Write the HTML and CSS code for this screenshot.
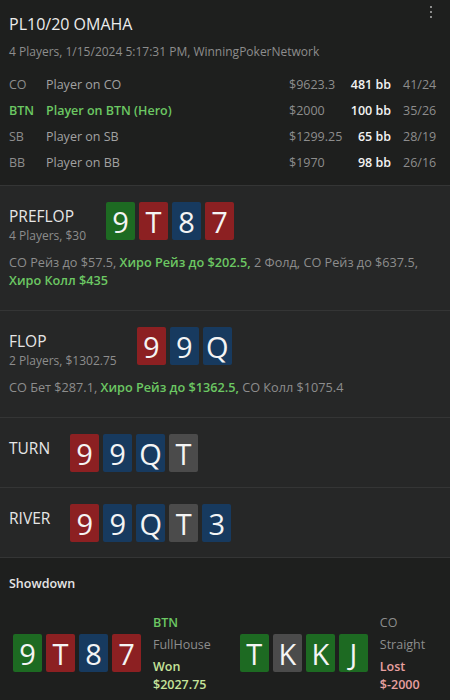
FILE: index.html
```html
<!DOCTYPE html>
<html lang="ru">
<head>
    <meta charset="UTF-8">
    <meta name="viewport" content="width=device-width, initial-scale=1.0">
    <title>PL10/20 OMAHA</title>
    <link rel="stylesheet" href="styles.css">
</head>
<body>
    <div class="header">
        <button class="menu-btn"><span></span><span></span><span></span></button>
        <h1>PL10/20 OMAHA</h1>
        <div class="subtitle">4 Players, 1/15/2024 5:17:31 PM, WinningPokerNetwork</div>
        <div class="players">
            <div class="player">
                <span class="pos">CO</span>
                <span class="name">Player on CO</span>
                <span class="stack">$9623.3</span>
                <span class="bb">481 bb</span>
                <span class="stats">41/24</span>
            </div>
            <div class="player hero">
                <span class="pos">BTN</span>
                <span class="name">Player on BTN (Hero)</span>
                <span class="stack">$2000</span>
                <span class="bb">100 bb</span>
                <span class="stats">35/26</span>
            </div>
            <div class="player">
                <span class="pos">SB</span>
                <span class="name">Player on SB</span>
                <span class="stack">$1299.25</span>
                <span class="bb">65 bb</span>
                <span class="stats">28/19</span>
            </div>
            <div class="player">
                <span class="pos">BB</span>
                <span class="name">Player on BB</span>
                <span class="stack">$1970</span>
                <span class="bb">98 bb</span>
                <span class="stats">26/16</span>
            </div>
        </div>
    </div>

    <div class="street">
        <div class="street-top">
            <div class="street-label">
                <div class="street-name">PREFLOP</div>
                <div class="street-info">4 Players, $30</div>
            </div>
            <div class="cards">
                <span class="card clubs">9</span>
                <span class="card hearts">T</span>
                <span class="card diamonds">8</span>
                <span class="card hearts">7</span>
            </div>
        </div>
        <div class="actions">CO Рейз до $57.5, <b class="hero-act">Хиро Рейз до $202.5,</b> 2 Фолд, CO Рейз до $637.5, <b class="hero-act">Хиро Колл $435</b></div>
    </div>

    <div class="street">
        <div class="street-top">
            <div class="street-label">
                <div class="street-name">FLOP</div>
                <div class="street-info">2 Players, $1302.75</div>
            </div>
            <div class="cards">
                <span class="card hearts">9</span>
                <span class="card diamonds">9</span>
                <span class="card diamonds">Q</span>
            </div>
        </div>
        <div class="actions">CO Бет $287.1, <b class="hero-act">Хиро Рейз до $1362.5,</b> CO Колл $1075.4</div>
    </div>

    <div class="street short">
        <div class="street-top">
            <div class="street-label">
                <div class="street-name">TURN</div>
            </div>
            <div class="cards">
                <span class="card hearts">9</span>
                <span class="card diamonds">9</span>
                <span class="card diamonds">Q</span>
                <span class="card spades">T</span>
            </div>
        </div>
    </div>

    <div class="street short">
        <div class="street-top">
            <div class="street-label">
                <div class="street-name">RIVER</div>
            </div>
            <div class="cards">
                <span class="card hearts">9</span>
                <span class="card diamonds">9</span>
                <span class="card diamonds">Q</span>
                <span class="card spades">T</span>
                <span class="card diamonds">3</span>
            </div>
        </div>
    </div>

    <div class="showdown">
        <h2>Showdown</h2>
        <div class="hands">
            <div class="hand">
                <div class="cards">
                    <span class="card clubs">9</span>
                    <span class="card hearts">T</span>
                    <span class="card diamonds">8</span>
                    <span class="card hearts">7</span>
                </div>
                <div class="hand-info">
                    <div class="hand-pos win-pos">BTN</div>
                    <div class="combo">FullHouse</div>
                    <div class="result won first">Won</div>
                    <div class="result won">$2027.75</div>
                </div>
            </div>
            <div class="hand">
                <div class="cards">
                    <span class="card clubs">T</span>
                    <span class="card spades">K</span>
                    <span class="card clubs">K</span>
                    <span class="card clubs">J</span>
                </div>
                <div class="hand-info">
                    <div class="hand-pos">CO</div>
                    <div class="combo">Straight</div>
                    <div class="result lost first">Lost</div>
                    <div class="result lost">$-2000</div>
                </div>
            </div>
        </div>
    </div>
</body>
</html>
```

FILE: styles.css
```css
body {
    margin: 0;
    background: #1e1f1e;
    color: #e6e6e6;
    font-family: "Open Sans", "Noto Sans", sans-serif;
    font-size: 12.5px;
}
.header {
    position: relative;
    padding: 13px 9px 10px;
    border-bottom: 1px solid #343535;
}
.menu-btn {
    position: absolute;
    top: 6px;
    right: 18px;
    display: flex;
    flex-direction: column;
    gap: 3px;
    background: none;
    border: none;
    padding: 0;
}
.menu-btn span {
    width: 2px;
    height: 2px;
    background: #8c8c8c;
}
h1 {
    margin: 0;
    font-size: 16px;
    line-height: 22px;
    font-weight: normal;
    color: #ececec;
}
.subtitle {
    margin-top: 8px;
    font-size: 12px;
    line-height: 17px;
    color: #8d8d8d;
}
.players {
    margin-top: 11px;
}
.player {
    display: grid;
    grid-template-columns: 37px 243px 52px 50px 1fr;
    height: 26px;
    align-items: center;
    white-space: nowrap;
    color: #8d8d8d;
    font-size: 12.5px;
}
.player .name {
    color: #a2a2a2;
}
.player .bb {
    color: #f2f2f2;
    font-weight: 600;
    text-align: right;
}
.player .stats {
    padding-left: 12px;
}
.player.hero .pos,
.player.hero .name {
    color: #6cc863;
    font-weight: 600;
}
.street {
    background: #262727;
    padding: 16px 9px 21px;
    border-bottom: 1px solid #343535;
}
.street.short {
    padding-bottom: 15px;
}
.street-top {
    display: flex;
    align-items: flex-start;
    gap: 20px;
}
.street-name {
    margin-top: 3px;
    font-size: 15.5px;
    line-height: 22px;
    color: #e6e6e6;
}
.street-info {
    font-size: 12px;
    line-height: 17px;
    color: #8d8d8d;
}
.cards {
    display: flex;
    gap: 4px;
}
.card {
    width: 29px;
    height: 38px;
    border-radius: 2px;
    display: flex;
    align-items: center;
    justify-content: center;
    font-size: 29px;
    line-height: 1;
    color: #f4f4f4;
}
.card.clubs {
    background: #1d6a22;
}
.card.hearts {
    background: #8c2022;
}
.card.diamonds {
    background: #173a5f;
}
.card.spades {
    background: #4b4b4b;
}
.actions {
    margin-top: 9px;
    font-size: 12.7px;
    line-height: 18px;
    color: #8d8d8d;
}
.hero-act {
    color: #6cc863;
    font-weight: 600;
}
.showdown {
    padding: 17px 9px 0;
}
h2 {
    margin: 0;
    font-size: 12.5px;
    line-height: 18px;
    font-weight: 600;
    color: #e6e6e6;
}
.hands {
    display: flex;
    gap: 29px;
    margin-top: 19px;
    padding-left: 4px;
}
.hand {
    display: flex;
    align-items: center;
    gap: 12px;
}
.hand-info {
    font-size: 12.5px;
    line-height: 22px;
    color: #8d8d8d;
}
.hand-pos.win-pos {
    color: #6cc863;
    font-weight: 600;
}
.result {
    font-weight: 600;
    line-height: 18px;
}
.result.first {
    margin-top: 2px;
}
.result.won {
    color: #c6e49a;
}
.result.lost {
    color: #e8a0a0;
}
```
